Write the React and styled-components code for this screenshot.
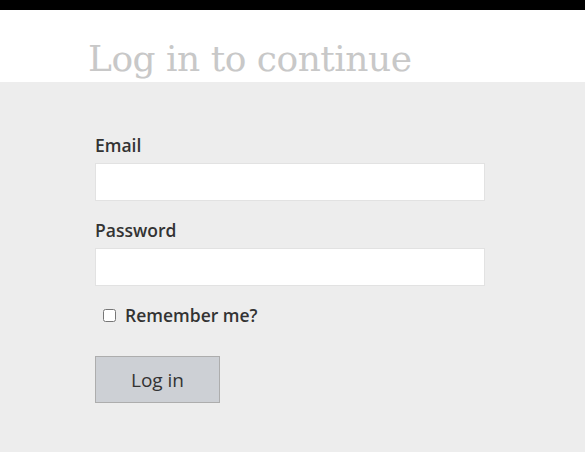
import React, { useState } from "react";
import styled, { createGlobalStyle } from "styled-components";

const GlobalStyle = createGlobalStyle`
  html, body {
    margin: 0;
    padding: 0;
    background: #ededed;
  }
  body {
    font-family: "Open Sans", "Noto Sans", sans-serif;
  }
`;

const Page = styled.div`
  min-height: 452px;
  display: flex;
  flex-direction: column;
  border-top: 10px solid #000;
`;

const Header = styled.header`
  background: #fff;
  height: 72px;
  padding-left: 88px;
  display: flex;
  align-items: flex-end;
  overflow: hidden;
`;

const Title = styled.h1`
  margin: 0 0 1px 0;
  font-family: "DejaVu Serif", serif;
  font-weight: normal;
  font-size: 36px;
  line-height: 44px;
  letter-spacing: -0.5px;
  color: #c8c8c8;
`;

const Main = styled.main`
  flex: 1;
  background: #ededed;
  padding: 50px 0 0 95px;
`;

const Form = styled.form`
  width: 390px;
  display: flex;
  flex-direction: column;
`;

const Field = styled.div`
  display: flex;
  flex-direction: column;
  margin-bottom: 16px;
`;

const Label = styled.label`
  font-size: 17.5px;
  font-weight: 600;
  color: #333;
  line-height: 26px;
  margin-bottom: 5px;
`;

const Input = styled.input`
  box-sizing: border-box;
  height: 38px;
  width: 100%;
  border: 1px solid #e2e2e2;
  background: #fff;
  padding: 0 10px;
  font-size: 16px;
  outline: none;
`;

const CheckRow = styled.label`
  display: flex;
  align-items: center;
  gap: 9px;
  padding-left: 8px;
  font-size: 17.5px;
  font-weight: 600;
  color: #333;
  line-height: 26px;
`;

const Check = styled.input`
  margin: 0;
  width: 13px;
  height: 13px;
`;

const Button = styled.button`
  margin-top: 28px;
  width: 125px;
  height: 47px;
  background: #cdd0d5;
  border: 1px solid #adadad;
  font-family: "Open Sans", "Noto Sans", sans-serif;
  font-size: 19px;
  color: #333;
  cursor: pointer;
`;

const App = () => {
  const [form, setForm] = useState({ email: "", password: "", remember: false });

  function handleChange(event) {
    const { name, value, type, checked } = event.target;
    setForm({ ...form, [name]: type === "checkbox" ? checked : value });
  }

  return (
    <>
      <GlobalStyle />
      <Page>
        <Header>
          <Title>Log in to continue</Title>
        </Header>
        <Main>
          <Form onSubmit={e => e.preventDefault()}>
            <Field>
              <Label>Email</Label>
              <Input type="email" name="email" value={form.email} onChange={handleChange} />
            </Field>
            <Field>
              <Label>Password</Label>
              <Input type="password" name="password" value={form.password} onChange={handleChange} />
            </Field>
            <CheckRow>
              <Check type="checkbox" name="remember" checked={form.remember} onChange={handleChange} />
              Remember me?
            </CheckRow>
            <div>
              <Button type="submit">Log in</Button>
            </div>
          </Form>
        </Main>
      </Page>
    </>
  );
};

export default App;
